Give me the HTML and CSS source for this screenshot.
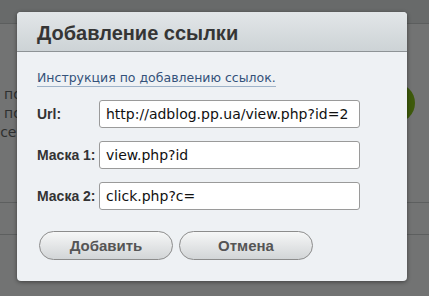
FILE: index.html
```html
<!DOCTYPE html>
<html lang="ru">
<head>
<meta charset="utf-8">
<link rel="stylesheet" href="styles.css">
</head>
<body>
<div class="page">
  <div class="topbar"></div>
  <div class="content">
    <div class="bg-text">
      <div class="bg-line">о по</div>
      <div class="bg-line"><span class="bg-blue">а</span> по</div>
      <div class="bg-line">: се</div>
    </div>
    <div class="bg-rule first"></div>
    <div class="bg-rule second"></div>
    <div class="bg-circle"></div>
  </div>
</div>
<div class="dialog">
  <div class="dialog-head">Добавление ссылки</div>
  <div class="dialog-body">
    <a class="help" href="#">Инструкция по добавлению ссылок.</a>
    <div class="form">
      <label class="lbl">Url:</label>
      <div class="field">http://adblog.pp.ua/view.php?id=2</div>
      <label class="lbl">Маска 1:</label>
      <div class="field">view.php?id</div>
      <label class="lbl">Маска 2:</label>
      <div class="field">click.php?c=</div>
    </div>
    <div class="buttons">
      <button class="btn">Добавить</button>
      <button class="btn">Отмена</button>
    </div>
  </div>
</div>
</body>
</html>
```
FILE: styles.css
```css
html, body {
  margin: 0;
  padding: 0;
}
body {
  width: 429px;
  height: 296px;
  overflow: hidden;
  background: #727373;
  font-family: "DejaVu Sans", sans-serif;
  position: relative;
}
.page {
  display: flex;
  flex-direction: column;
  height: 296px;
}
.topbar {
  height: 23px;
  background: #686a6a;
  border-bottom: 1px solid #5c5e5e;
}
.content {
  position: relative;
  flex: 1;
}
.bg-text {
  padding-top: 61px;
  margin-left: -9px;
  font-size: 14px;
  line-height: 19px;
  color: #2e3030;
}
.bg-blue {
  color: #2a4a6a;
}
.bg-rule {
  height: 0;
  border-top: 1px solid #5d5f5f;
}
.bg-rule.first {
  margin-top: 60px;
}
.bg-rule.second {
  margin-top: 31px;
}
.bg-circle {
  position: absolute;
  left: 374px;
  top: 59px;
  width: 41px;
  height: 40px;
  border-radius: 50%;
  background: #3e5a0b;
}
.dialog {
  position: absolute;
  left: 17px;
  top: 12px;
  width: 390px;
  height: 269px;
  border-radius: 4px;
  background: #eef1f4;
  box-shadow: 0 1px 4px rgba(0, 0, 0, 0.45);
  overflow: hidden;
}
.dialog-head {
  height: 40px;
  box-sizing: border-box;
  padding: 9px 0 0 20px;
  background: linear-gradient(#e2e6e8, #cdd3d6);
  border-bottom: 1px solid #8e9396;
  font-family: "Liberation Sans", Arial, sans-serif;
  font-weight: bold;
  font-size: 20px;
  line-height: 24px;
  color: #353535;
}
.dialog-body {
  padding: 15px 0 0 20px;
}
.help {
  display: inline-block;
  font-size: 12.5px;
  line-height: 17px;
  color: #34527a;
  text-decoration: none;
  border-bottom: 1px solid #9fb3c8;
}
.form {
  display: grid;
  grid-template-columns: 62px 261px;
  row-gap: 13px;
  align-items: center;
  margin-top: 13px;
}
.lbl {
  font-family: "Liberation Sans", Arial, sans-serif;
  font-weight: bold;
  font-size: 14px;
  color: #333;
}
.field {
  height: 28px;
  box-sizing: border-box;
  background: #fff;
  border: 1px solid #9a9a9a;
  border-radius: 3px;
  padding: 0 0 0 6px;
  font-size: 14px;
  line-height: 26px;
  color: #111;
  white-space: nowrap;
  overflow: hidden;
}
.buttons {
  display: flex;
  gap: 6px;
  margin-top: 21px;
  margin-left: 2px;
}
.btn {
  width: 134px;
  height: 29px;
  border: 1px solid #8c8c8c;
  border-radius: 15px;
  background: linear-gradient(#f6f7f7, #d2d5d7);
  font-family: "Liberation Sans", Arial, sans-serif;
  font-weight: bold;
  font-size: 15px;
  color: #555;
  padding: 0;
}
```
